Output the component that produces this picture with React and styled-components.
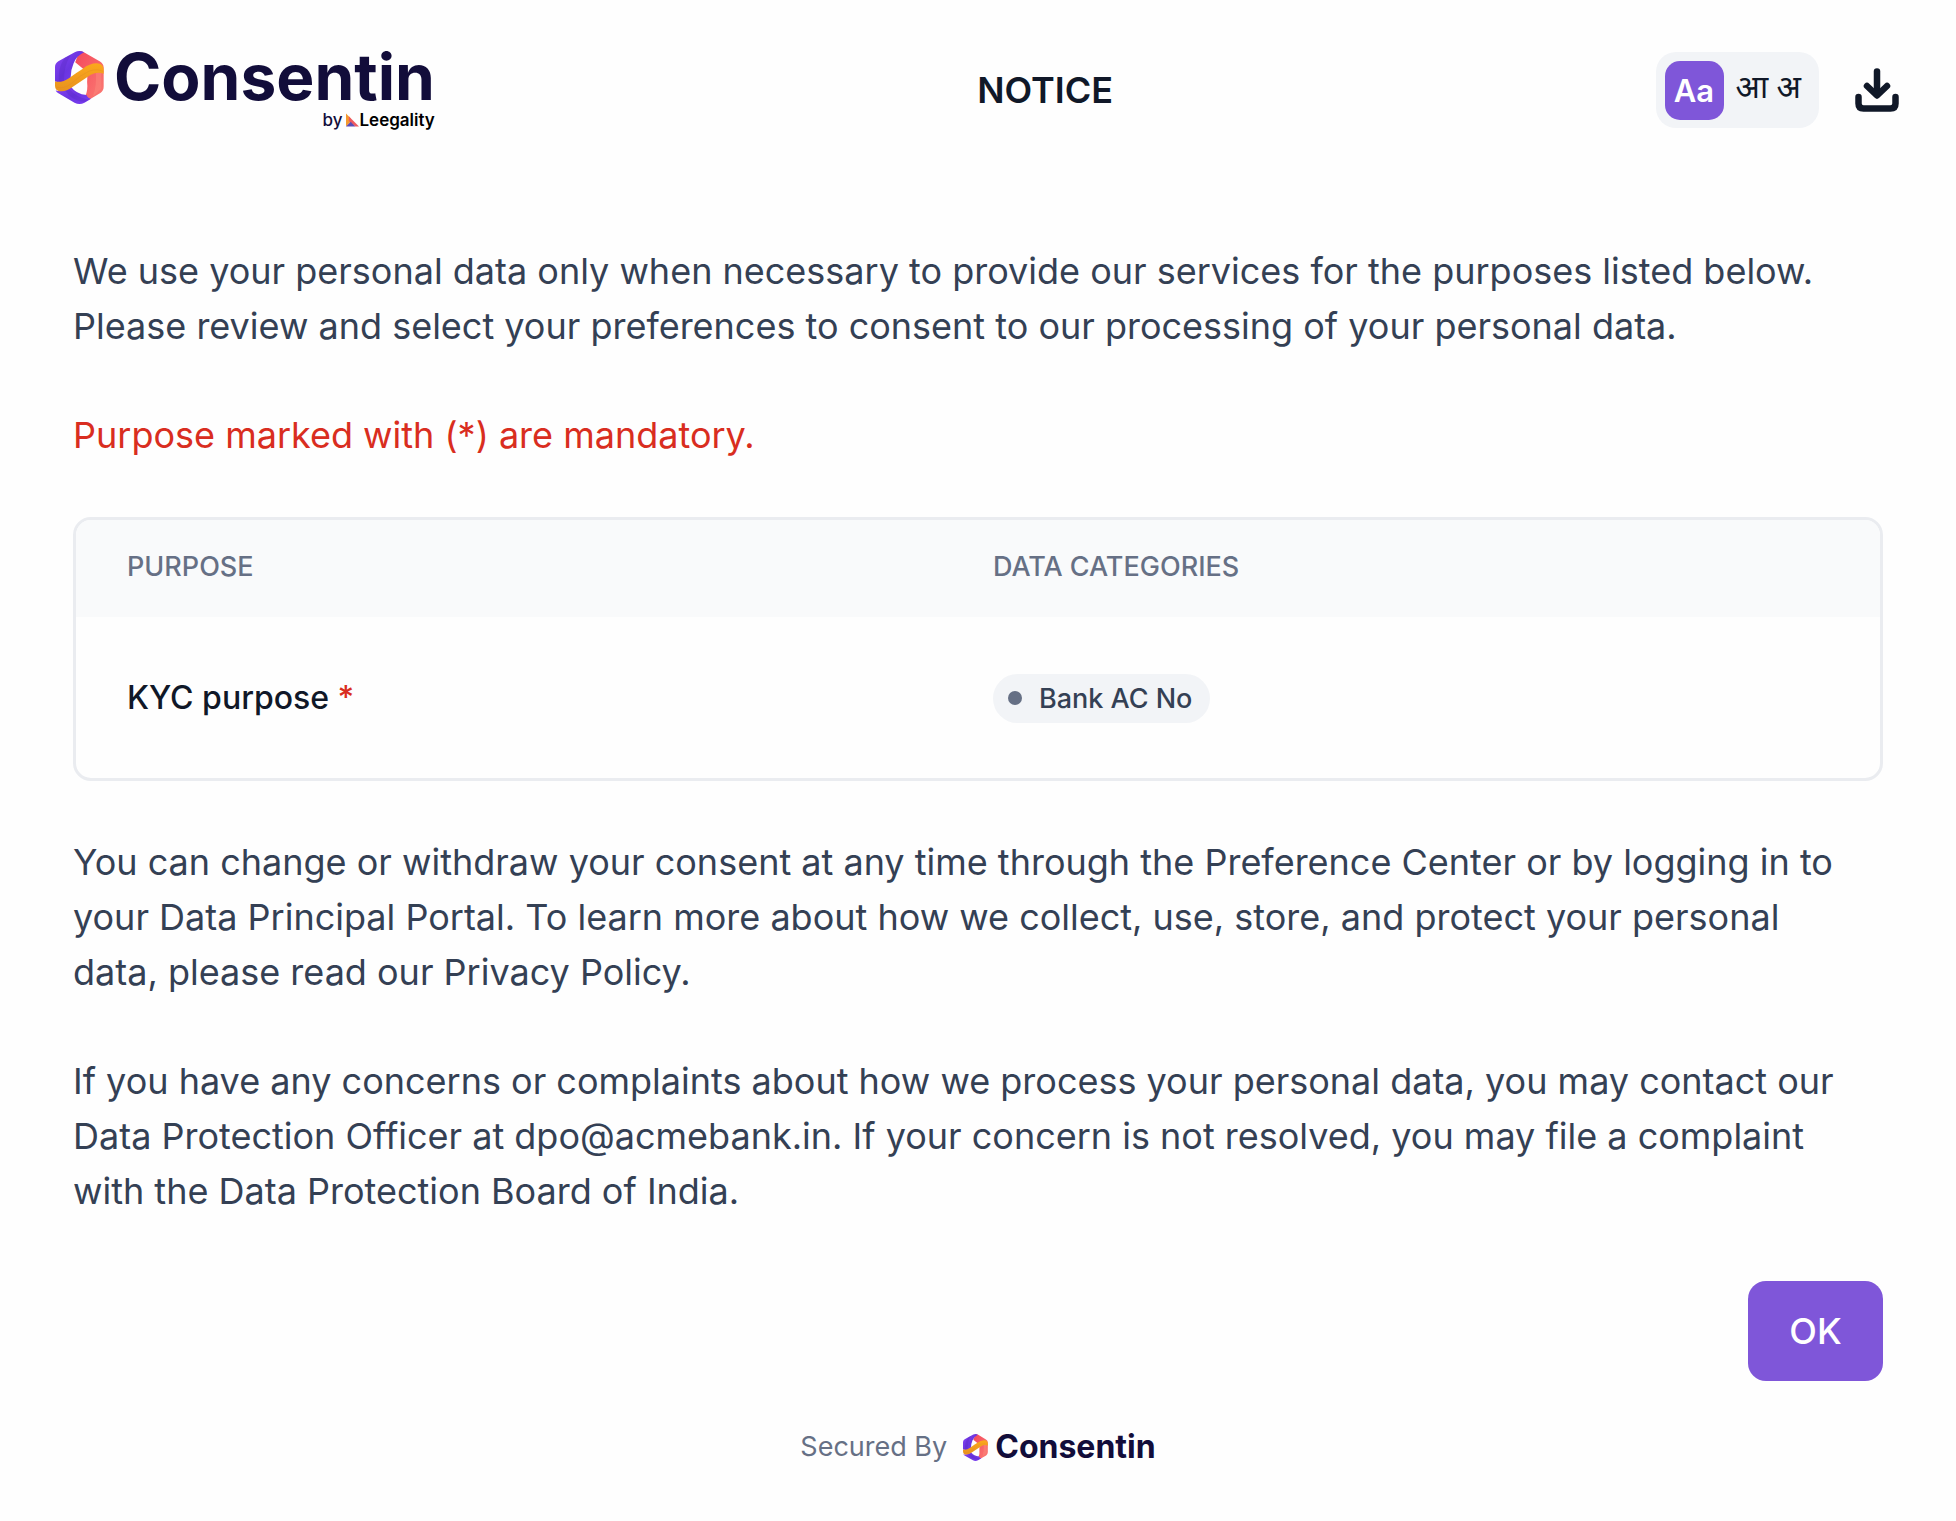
import React from 'react';
import styled, { createGlobalStyle } from 'styled-components';

const GlobalStyle = createGlobalStyle`
  * {
    box-sizing: border-box;
  }

  body {
    margin: 0;
    background: #fefefe;
    color: #344054;
    font-family: Inter, "Noto Sans", sans-serif;
  }
`;

const purposes = [
  { name: 'KYC purpose', mandatory: true, categories: ['Bank AC No'] },
];

const LogoMark = ({ id, ...props }) => (
  <svg viewBox="30 30 148 160" aria-hidden="true" {...props}>
    <defs>
      <linearGradient id={`${id}-purple`} x1="0" y1="0" x2="1" y2="1">
        <stop offset="0" stopColor="#8a45f5" />
        <stop offset="0.5" stopColor="#6a35e0" />
        <stop offset="1" stopColor="#7c3df5" />
      </linearGradient>
      <linearGradient id={`${id}-red`} x1="0" y1="0" x2="1" y2="1">
        <stop offset="0" stopColor="#f4485c" />
        <stop offset="1" stopColor="#fb7a72" />
      </linearGradient>
      <linearGradient id={`${id}-gold`} x1="0" y1="0" x2="0" y2="1">
        <stop offset="0" stopColor="#fba81c" />
        <stop offset="1" stopColor="#e8921f" />
      </linearGradient>
    </defs>
    <path
      fill={`url(#${id}-red)`}
      d="M104 30Q112 30 120 35L166 62Q177 69 177 80V138Q177 150 167 157L133 177Q119 178 121 168Q130 148 127 124L128 96L113 82L91 64Z"
    />
    <path fill="#fb8078" opacity="0.7" d="M153 90L170 84V143L144 168Q157 134 153 90Z" />
    <path
      fill={`url(#${id}-purple)`}
      d="M30 122V78Q30 68 40 61L91 33Q104 27 118 34Q94 45 86 68Q77 88 77 112L60 128Z"
    />
    <path fill="#5b2bc6" opacity="0.4" d="M60 50L78 41Q56 74 57 122L42 124Q38 78 60 50Z" />
    <path
      fill={`url(#${id}-purple)`}
      d="M36 151Q60 152 78 138Q94 160 125 163Q128 172 139 174L119 186Q104 194 89 186L39 157Q33 154 32 147Z"
    />
    <path fill="#5b2bc6" opacity="0.4" d="M60 149L72 143Q94 171 133 177L120 184Q82 181 60 149Z" />
    <path
      fill={`url(#${id}-gold)`}
      d="M30 122Q52 126 72 112Q92 97 113 84Q143 62 167 69Q177 73 177 88V99Q159 91 138 102L84 138Q58 157 39 150Q30 146 30 134Z"
    />
    <path
      fill="none"
      stroke="#e08b22"
      strokeWidth="3"
      opacity="0.4"
      d="M33 139Q58 146 79 128Q109 101 133 91Q157 82 176 92"
    />
  </svg>
);

const LeegalityMark = (props) => (
  <svg viewBox="0 0 14 14" aria-hidden="true" {...props}>
    <path fill="#f59a2e" d="M0 0L5 5V9L0 14Z" />
    <path fill="#ee5a5f" d="M3 3L14 14H10L3 8Z" />
    <path fill="#5b4bb4" d="M0 14L5 9L10 14Z" />
  </svg>
);

const DownloadIcon = () => (
  <svg
    width="44"
    height="46"
    viewBox="0 0 44 46"
    fill="none"
    stroke="currentColor"
    strokeWidth="6.5"
    strokeLinecap="round"
    strokeLinejoin="round"
    aria-hidden="true"
  >
    <path d="M22 4.5V27" />
    <path d="M12 19L22 28.5L32 19" />
    <path d="M3.500 30V36.500Q3.500 41.500 8.500 41.500H35.500Q40.500 41.500 40.500 36.500V30" />
  </svg>
);

const App = () => {
  return (
    <>
      <GlobalStyle />
      <Header>
        <Brand>
          <BrandRow>
            <HeaderMark id="header" />
            <Wordmark>Consentin</Wordmark>
          </BrandRow>
          <Byline>
            by <BylineMark />
            <strong>Leegality</strong>
          </Byline>
        </Brand>
        <Title>NOTICE</Title>
        <Actions>
          <LanguageSwitch type="button" aria-label="Change language">
            <Latin>Aa</Latin>
            <Hindi lang="hi">आ अ</Hindi>
          </LanguageSwitch>
          <IconButton type="button" aria-label="Download notice">
            <DownloadIcon />
          </IconButton>
        </Actions>
      </Header>

      <Main>
        <Text>
          We use your personal data only when necessary to provide our services for the purposes
          listed below. Please review and select your preferences to consent to our processing of
          your personal data.
        </Text>
        <Text $danger>Purpose marked with (*) are mandatory.</Text>

        <TableFrame>
          <Table>
            <thead>
              <tr>
                <HeadCell $first>PURPOSE</HeadCell>
                <HeadCell>DATA CATEGORIES</HeadCell>
              </tr>
            </thead>
            <tbody>
              {purposes.map((purpose) => (
                <tr key={purpose.name}>
                  <Cell>
                    {purpose.name} {purpose.mandatory && <Asterisk>*</Asterisk>}
                  </Cell>
                  <Cell>
                    {purpose.categories.map((category) => (
                      <Chip key={category}>{category}</Chip>
                    ))}
                  </Cell>
                </tr>
              ))}
            </tbody>
          </Table>
        </TableFrame>

        <Text>
          You can change or withdraw your consent at any time through the Preference Center or by
          logging in to your Data Principal Portal. To learn more about how we collect, use, store,
          and protect your personal data, please read our Privacy Policy.
        </Text>
        <Text>
          If you have any concerns or complaints about how we process your personal data, you may
          contact our Data Protection Officer at dpo@acmebank.in. If your concern is not resolved,
          you may file a complaint with the Data Protection Board of India.
        </Text>

        <OkButton type="button">OK</OkButton>
      </Main>

      <Footer>
        Secured By
        <FooterBrand>
          <FooterMark id="footer" />
          <Wordmark $small>Consentin</Wordmark>
        </FooterBrand>
      </Footer>
    </>
  );
};

const Header = styled.header`
  display: flex;
  align-items: center;
  justify-content: space-between;
  padding: 48px 57px 0 55px;
`;

const Brand = styled.div`
  display: flex;
  flex-direction: column;
  align-items: flex-end;
  gap: 2px;
`;

const BrandRow = styled.div`
  display: flex;
  align-items: center;
  gap: 10px;
`;

const HeaderMark = styled(LogoMark)`
  width: 49px;
  height: 53px;
`;

const Wordmark = styled.span`
  color: #120d3a;
  font-weight: 700;
  font-size: ${(p) => (p.$small ? '32px' : '64px')};
  line-height: ${(p) => (p.$small ? '34px' : '58px')};
`;

const Byline = styled.div`
  display: flex;
  align-items: center;
  color: #120d3a;
  font-weight: 500;
  font-size: 17px;
  line-height: 24px;

  strong {
    color: #000;
    font-weight: 600;
  }
`;

const BylineMark = styled(LeegalityMark)`
  width: 13px;
  height: 14px;
  margin-left: 4px;
`;

const Title = styled.h1`
  margin: 0;
  color: #101828;
  font-weight: 600;
  font-size: 36px;
  line-height: 54px;
`;

const Actions = styled.div`
  display: flex;
  align-items: center;
  gap: 36px;
`;

const LanguageSwitch = styled.button`
  display: flex;
  align-items: center;
  gap: 12px;
  height: 76px;
  padding: 0 18px 0 9px;
  border: 0;
  border-radius: 20px;
  background: #f2f4f7;
  color: #101828;
`;

const Latin = styled.span`
  width: 59px;
  border-radius: 15px;
  background: #7f56d9;
  color: #fff;
  font: 600 31px/59px Inter, sans-serif;
  text-align: center;
`;

const Hindi = styled.span`
  padding-bottom: 8px;
  font: 400 32px/40px "Noto Sans", "Noto Sans Devanagari", sans-serif;
`;

const IconButton = styled.button`
  display: flex;
  padding: 0;
  border: 0;
  background: none;
  color: #101828;
`;

const Main = styled.main`
  display: flex;
  flex-direction: column;
  gap: 54px;
  padding: 112px 73px 0;
`;

const Text = styled.p`
  margin: 0;
  padding-right: 24px;
  color: ${(p) => (p.$danger ? '#d92d20' : '#344054')};
  font-size: 36px;
  line-height: 55px;
`;

const TableFrame = styled.div`
  overflow: hidden;
  border: 3px solid #eaecf0;
  border-radius: 18px;
`;

const Table = styled.table`
  width: 100%;
  border-collapse: collapse;
  table-layout: fixed;
`;

const HeadCell = styled.th`
  width: ${(p) => (p.$first ? '48%' : 'auto')};
  height: 97px;
  padding: 0 51px 4px;
  background: #f9fafb;
  color: #667085;
  font-weight: 500;
  font-size: 27px;
  line-height: 36px;
  text-align: left;
`;

const Cell = styled.td`
  height: 161px;
  padding: 0 51px;
  color: #101828;
  font-weight: 500;
  font-size: 32px;
  line-height: 48px;
`;

const Asterisk = styled.span`
  color: #d92d20;
`;

const Chip = styled.span`
  display: inline-flex;
  align-items: center;
  gap: 17px;
  padding: 0 18px 0 15px;
  border-radius: 25px;
  background: #f2f4f7;
  color: #344054;
  font-size: 27px;
  line-height: 49px;
  vertical-align: middle;

  &::before {
    width: 14px;
    height: 14px;
    border-radius: 50%;
    background: #667085;
    content: "";
  }
`;

const OkButton = styled.button`
  align-self: flex-end;
  width: 135px;
  height: 100px;
  margin-top: 8px;
  border: 0;
  border-radius: 18px;
  background: #7f56d9;
  color: #fff;
  font: 500 36px/54px Inter, sans-serif;
`;

const Footer = styled.footer`
  display: flex;
  align-items: center;
  justify-content: center;
  gap: 16px;
  padding: 48px 0;
  color: #667085;
  font-size: 27px;
  line-height: 36px;
`;

const FooterBrand = styled.div`
  display: flex;
  align-items: center;
  gap: 7px;
`;

const FooterMark = styled(LogoMark)`
  width: 25px;
  height: 27px;
`;

export default App;
